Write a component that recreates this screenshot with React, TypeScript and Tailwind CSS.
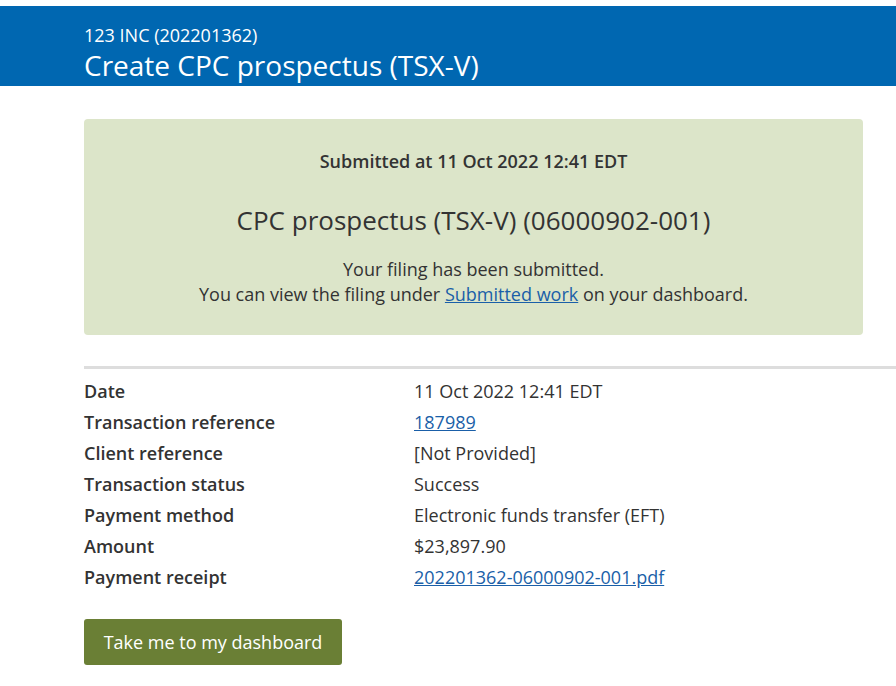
export default function App() {
  const rows: [string, string, boolean?][] = [
    ["Date", "11 Oct 2022 12:41 EDT"],
    ["Transaction reference", "187989", true],
    ["Client reference", "[Not Provided]"],
    ["Transaction status", "Success"],
    ["Payment method", "Electronic funds transfer (EFT)"],
    ["Amount", "$23,897.90"],
    ["Payment receipt", "202201362-06000902-001.pdf", true],
  ];
  return (
    <div className="min-h-[686px] bg-white text-[#333333]" style={{ fontFamily: '"Open Sans", sans-serif' }}>
      <div className="pt-[6px]">
        <div className="bg-[#0067b1] h-[80px] pl-[84px] pt-[18px] text-white">
          <div className="text-[18px] leading-[22px]">123 INC (202201362)</div>
          <div className="mt-[2px] text-[28px] leading-[34px]">Create CPC prospectus (TSX-V)</div>
        </div>
      </div>
      <div className="pl-[84px]">
        <div className="mt-[33px] w-[779px] h-[216px] rounded bg-[#dce5c9] flex flex-col items-center pt-[30px]">
          <div className="text-[18px] font-semibold leading-[24px]">Submitted at 11 Oct 2022 12:41 EDT</div>
          <div className="mt-[30px] text-[26px] leading-[34px]">CPC prospectus (TSX-V) (06000902-001)</div>
          <div className="mt-[20px] text-[18px] leading-[25px] text-center">
            <div>Your filing has been submitted.</div>
            <div>
              You can view the filing under{" "}
              <a href="#" className="text-[#1a5fa8] underline">Submitted work</a> on your dashboard.
            </div>
          </div>
        </div>
        <div className="mt-[31px] h-[3px] bg-[#dddddd]" />
        <div className="mt-[7px]">
          {rows.map(([k, v, link]) => (
            <div key={k} className="flex h-[31px] items-center text-[18px]">
              <div className="w-[330px] font-semibold">{k}</div>
              <div>
                {link ? <a href="#" className="text-[#1a5fa8] underline">{v}</a> : v}
              </div>
            </div>
          ))}
        </div>
        <button className="mt-[26px] h-[46px] w-[258px] rounded-[3px] bg-[#6a7f35] text-white text-[18px]">
          Take me to my dashboard
        </button>
      </div>
    </div>
  );
}
